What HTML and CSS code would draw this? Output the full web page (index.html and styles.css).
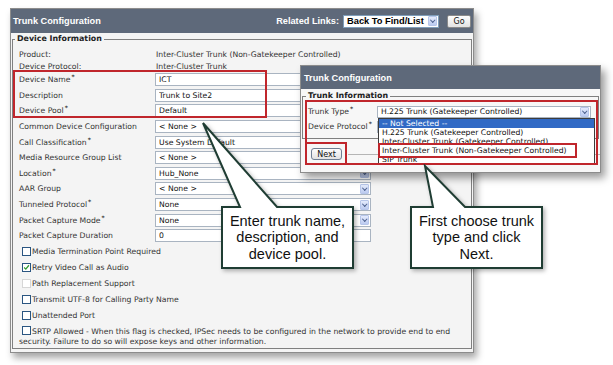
FILE: index.html
```html
<!DOCTYPE html>
<html lang="en">
<head>
    <meta charset="UTF-8">
    <meta name="viewport" content="width=device-width, initial-scale=1.0">
    <title>Trunk Configuration</title>
    <link rel="stylesheet" href="styles.css">
</head>
<body>
    <div class="desk">
        <section class="win win-main">
            <header class="titlebar">
                <span class="title">Trunk Configuration</span>
                <span class="links">Related Links:</span>
                <div class="sel-links"><span class="val">Back To Find/List</span><i class="arrow"></i></div>
                <button class="btn go">Go</button>
            </header>
            <fieldset class="group">
                <legend>Device Information</legend>
                <div class="info"><span class="lbl">Product:</span><span class="info-val">Inter-Cluster Trunk (Non-Gatekeeper Controlled)</span></div>
                <div class="info"><span class="lbl">Device Protocol:</span><span class="info-val">Inter-Cluster Trunk</span></div>
                <div class="row"><span class="lbl">Device Name<sup>*</sup></span><div class="field"><span class="val">ICT</span></div></div>
                <div class="row"><span class="lbl">Description</span><div class="field"><span class="val">Trunk to Site2</span></div></div>
                <div class="row"><span class="lbl">Device Pool<sup>*</sup></span><div class="field"><span class="val">Default</span><i class="arrow"></i></div></div>
                <div class="row"><span class="lbl">Common Device Configuration</span><div class="field"><span class="val">&lt; None &gt;</span><i class="arrow"></i></div></div>
                <div class="row"><span class="lbl">Call Classification<sup>*</sup></span><div class="field"><span class="val">Use System Default</span><i class="arrow"></i></div></div>
                <div class="row"><span class="lbl">Media Resource Group List</span><div class="field"><span class="val">&lt; None &gt;</span><i class="arrow"></i></div></div>
                <div class="row"><span class="lbl">Location<sup>*</sup></span><div class="field"><span class="val">Hub_None</span><i class="arrow"></i></div></div>
                <div class="row"><span class="lbl">AAR Group</span><div class="field"><span class="val">&lt; None &gt;</span><i class="arrow"></i></div></div>
                <div class="row"><span class="lbl">Tunneled Protocol<sup>*</sup></span><div class="field"><span class="val">None</span><i class="arrow"></i></div></div>
                <div class="row"><span class="lbl">Packet Capture Mode<sup>*</sup></span><div class="field"><span class="val">None</span><i class="arrow"></i></div></div>
                <div class="row"><span class="lbl">Packet Capture Duration</span><div class="field"><span class="val">0</span></div></div>

                <div class="check"><span class="box"></span>Media Termination Point Required</div>
                <div class="check"><span class="box on"><svg viewBox="0 0 9 9"><path d="M1.5 4.5 L3.6 6.6 L7.6 1.6" fill="none" stroke="#2f9a2f" stroke-width="1.6"/></svg></span>Retry Video Call as Audio</div>
                <div class="check"><span class="box dim"></span>Path Replacement Support</div>
                <div class="check"><span class="box"></span>Transmit UTF-8 for Calling Party Name</div>
                <div class="check"><span class="box"></span>Unattended Port</div>
                <p class="srtp"><span class="box"></span>SRTP Allowed - When this flag is checked, IPSec needs to be configured in the network to provide end to end security. Failure to do so will expose keys and other information.</p>
            </fieldset>
        </section>

        <section class="win win-popup">
            <header class="titlebar">
                <span class="title">Trunk Configuration</span>
            </header>
            <fieldset class="group group-pop">
                <legend>Trunk Information</legend>
                <div class="prow"><span class="plbl">Trunk Type<sup>*</sup></span><div class="field psel"><span class="val">H.225 Trunk (Gatekeeper Controlled)</span><i class="arrow"></i></div></div>
                <div class="prow"><span class="plbl">Device Protocol<sup>*</sup></span><div class="field psel"><span class="val"></span><i class="arrow"></i></div></div>
            </fieldset>
            <div class="actions"><button class="btn next">Next</button></div>

            <div class="drop">
                <div class="hi">-- Not Selected --</div>
                <div>H.225 Trunk (Gatekeeper Controlled)</div>
                <div>Inter-Cluster Trunk (Gatekeeper Controlled)</div>
                <div>Inter-Cluster Trunk (Non-Gatekeeper Controlled)</div>
                <div>SIP Trunk</div>
            </div>
        </section>

        <div class="mark m-device"></div>
        <div class="mark m-type"></div>
        <div class="mark m-next"></div>
        <div class="mark m-option"></div>

        <div class="callout callout-left">
            <svg class="shape" width="156" height="150" viewBox="200 121 156 150">
                <path d="M222 207 H240 L203 123 L277 207 H353 V268 H222 Z"/>
            </svg>
            <p>Enter trunk name,<br>description, and<br>device pool.</p>
        </div>
        <div class="callout callout-right">
            <svg class="shape" width="136" height="106" viewBox="409 164 136 106">
                <path d="M411 207 H433 L425 166 L465 207 H542 V268 H411 Z"/>
            </svg>
            <p>First choose trunk<br>type and click<br>Next.</p>
        </div>
    </div>
</body>
</html>
```

FILE: styles.css
```css
body {
    margin: 0;
    font-family: "DejaVu Sans", sans-serif;
    font-size: 7.7px;
    color: #333;
    background-color: #fff;
}

.desk {
    position: relative;
    width: 613px;
    height: 365px;
    overflow: hidden;
}

/* windows */
.win {
    position: absolute;
    display: flex;
    flex-direction: column;
    box-sizing: border-box;
    background-color: #f4f4f4;
    border: 1px solid #8c8c8c;
}

.win-main {
    left: 10px;
    top: 8px;
    width: 464px;
    height: 345px;
    box-shadow: 3px 5px 7px rgba(0, 0, 0, 0.35);
}

.win-popup {
    left: 300px;
    top: 65px;
    width: 301px;
    height: 108px;
    background-color: #f7f7f7;
    box-shadow: 4px 5px 8px rgba(0, 0, 0, 0.4);
}

.titlebar {
    display: flex;
    align-items: center;
    flex-shrink: 0;
    height: 24px;
    padding: 0 2px;
    background-color: #5e697a;
    color: #fff;
    font: bold 9.2px "Liberation Sans", sans-serif;
}

.win-popup .titlebar {
    height: 23px;
    padding-left: 3px;
}

.title {
    flex: 1;
}

.links {
    margin-right: 4px;
}

.sel-links {
    display: flex;
    align-items: center;
    box-sizing: border-box;
    width: 96px;
    height: 13px;
    padding: 0 1px 0 3px;
    background-color: #fff;
    border: 1px solid #7f9db9;
    color: #000;
    font-size: 9.3px;
}

.val {
    flex: 1;
    white-space: nowrap;
    overflow: hidden;
}

.btn {
    box-sizing: border-box;
    height: 13px;
    padding: 0;
    font-family: "DejaVu Sans", sans-serif;
    font-size: 8px;
    color: #111;
    background: linear-gradient(#fdfdfd, #e2e2e2);
    border: 1px solid #8a8a8a;
    border-radius: 2px;
}

.go {
    width: 24px;
    margin-left: 8px;
}

/* form groups */
.group {
    flex: 1;
    min-width: 0;
    margin: 1px 1px 3px 1px;
    padding: 4px 6px 0;
    border: 1px solid #808080;
}

.group legend {
    margin-left: -4px;
    padding: 0 2px;
    font-weight: bold;
    font-size: 7.9px;
    line-height: 10px;
    color: #222;
}

sup {
    font-size: 6px;
    font-weight: bold;
    vertical-align: 3px;
    line-height: 0;
    margin-left: 1px;
}

.info {
    display: flex;
    align-items: center;
    height: 12px;
}

.info-val {
    margin-left: 1px;
}

.lbl {
    flex-shrink: 0;
    width: 136px;
}

.row {
    display: flex;
    align-items: center;
    height: 15.6px;
}

.field {
    display: flex;
    align-items: center;
    box-sizing: border-box;
    width: 216px;
    height: 13px;
    padding: 0 1px 0 3px;
    background-color: #fff;
    border: 1px solid #a9b4c1;
    color: #111;
}

.arrow {
    position: relative;
    flex-shrink: 0;
    box-sizing: border-box;
    width: 9px;
    height: 10px;
    background: linear-gradient(#e4ebfc, #bccbf0);
    border: 1px solid #b7c6ea;
    border-radius: 1px;
}

.arrow::after {
    content: "";
    position: absolute;
    left: 2px;
    top: 1px;
    width: 2.5px;
    height: 2.5px;
    border-right: 1.5px solid #4b5f8c;
    border-bottom: 1.5px solid #4b5f8c;
    transform: rotate(45deg);
}

.check {
    display: flex;
    align-items: center;
    height: 16px;
    padding-left: 3px;
}

.box {
    display: inline-block;
    box-sizing: border-box;
    width: 9px;
    height: 9px;
    margin-right: 1px;
    background-color: #fff;
    border: 1px solid #2a5581;
    vertical-align: -1px;
}

.box svg {
    display: block;
    width: 7px;
    height: 7px;
}

.box.dim {
    border-color: #d6d6d6;
}

.srtp {
    margin: 2px 0 0;
    line-height: 10px;
}

.srtp .box {
    margin-left: 3px;
}

/* popup */
.group-pop {
    flex: none;
    margin: 2px 1px 0 1px;
    padding: 3px 5px 4px;
}

.group-pop legend {
    margin-left: -2px;
}

.prow {
    display: flex;
    align-items: center;
    height: 15px;
}

.plbl {
    flex-shrink: 0;
    width: 69px;
}

.psel {
    width: 214px;
    height: 12px;
}

.actions {
    display: flex;
    align-items: center;
    padding: 9px 0 0 10px;
}

.actions::after {
    content: "";
    flex: 1;
    height: 1px;
    margin-left: 6px;
    background-color: #b5b5b5;
}

.next {
    width: 31px;
    height: 12px;
    border-color: #6f7f94;
    border-radius: 3px;
}

.drop {
    position: absolute;
    left: 77px;
    top: 52px;
    box-sizing: border-box;
    width: 217px;
    height: 46px;
    background-color: #fff;
    border: 1px solid #3c3c3c;
    overflow: hidden;
    color: #111;
}

.drop div {
    height: 9px;
    line-height: 9px;
    padding-left: 3px;
    white-space: nowrap;
}

.drop .hi {
    background-color: #316ac5;
    color: #fff;
}

/* annotations */
.mark {
    position: absolute;
    box-sizing: border-box;
    border: 2px solid #c0262c;
}

.m-device {
    left: 13px;
    top: 70px;
    width: 254px;
    height: 48px;
}

.m-type {
    left: 305px;
    top: 100px;
    width: 293px;
    height: 65px;
}

.m-next {
    left: 305px;
    top: 142px;
    width: 42px;
    height: 23px;
}

.m-option {
    left: 378px;
    top: 143px;
    width: 199px;
    height: 15px;
}

.callout {
    position: absolute;
    top: 207px;
    width: 131px;
    height: 61px;
    display: flex;
    align-items: center;
    justify-content: center;
}

.callout-left {
    left: 222px;
}

.callout-right {
    left: 411px;
}

.shape {
    position: absolute;
    filter: drop-shadow(2px 2px 2px rgba(0, 0, 0, 0.3));
}

.callout-left .shape {
    left: -22px;
    top: -86px;
}

.callout-right .shape {
    left: -2px;
    top: -43px;
}

.shape path {
    fill: #fff;
    stroke: #1f3d33;
    stroke-width: 2;
    stroke-linejoin: miter;
}

.callout p {
    position: relative;
    margin: 0;
    font-family: "Liberation Sans", Arial, sans-serif;
    font-size: 14.5px;
    line-height: 16.5px;
    text-align: center;
    color: #111;
}
```
